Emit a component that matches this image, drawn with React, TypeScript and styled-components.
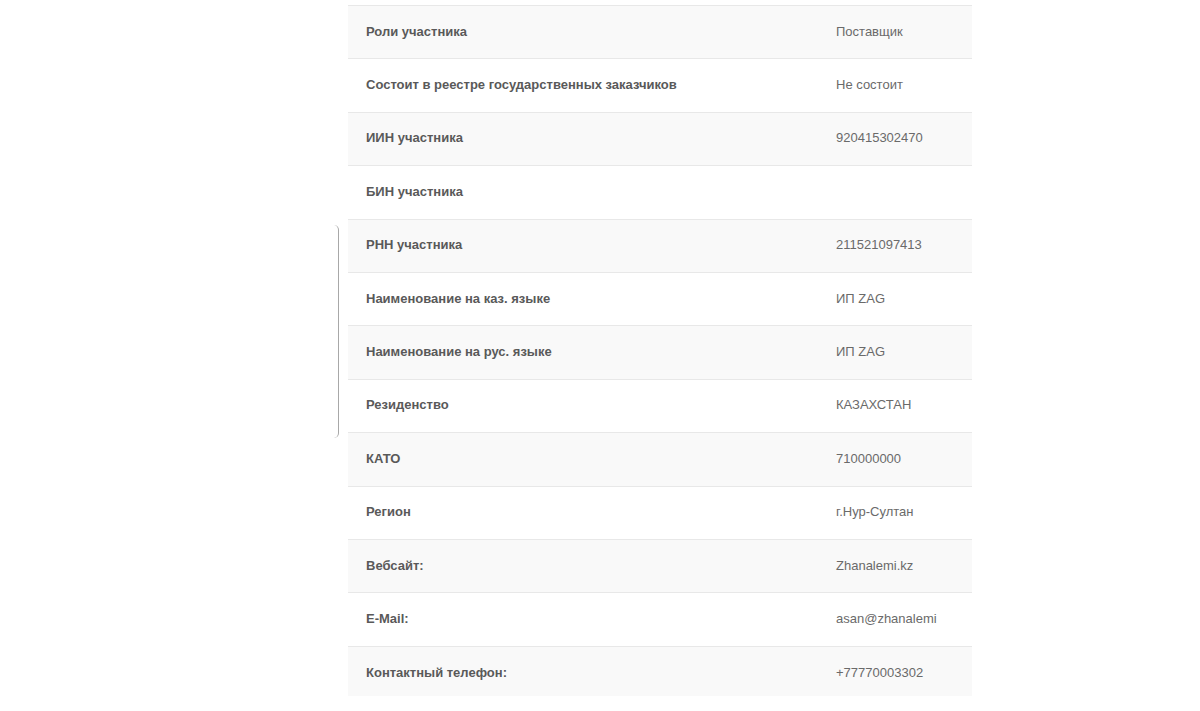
import React from "react";
import styled, { createGlobalStyle } from "styled-components";

const Global = createGlobalStyle`
  html, body { margin: 0; padding: 0; background: #fff; }
  body { font-family: "Liberation Sans", Arial, sans-serif; }
`;

const Page = styled.div`
  position: relative;
  width: 1200px;
  height: 711px;
  padding: 5px 0 0 348px;
  box-sizing: border-box;
  overflow: hidden;
`;

const Bracket = styled.div`
  position: absolute;
  left: 334px;
  top: 225px;
  width: 4px;
  height: 213px;
  border-right: 1.5px solid #a8a8a8;
  border-radius: 0 5px 5px 0;
`;

const Panel = styled.div`
  width: 624px;
  height: 691px;
  overflow: hidden;
`;

const Table = styled.table`
  width: 100%;
  border-collapse: collapse;
  font-size: 13px;
`;

const Row = styled.tr<{ $striped: boolean }>`
  background: ${(p) => (p.$striped ? "#f9f9f9" : "#fff")};
  height: 53.4px;
`;

const Label = styled.td`
  border-top: 1px solid #e8e8e8;
  padding: 0 18px 2px;
  width: 434px;
  font-weight: bold;
  color: #595959;
  vertical-align: middle;
`;

const Value = styled.td`
  border-top: 1px solid #e8e8e8;
  padding: 0 18px 2px;
  color: #6a6a6a;
  vertical-align: middle;
  white-space: nowrap;
`;

const rows: [string, string][] = [
  ["Роли участника", "Поставщик"],
  ["Состоит в реестре государственных заказчиков", "Не состоит"],
  ["ИИН участника", "920415302470"],
  ["БИН участника", ""],
  ["РНН участника", "211521097413"],
  ["Наименование на каз. языке", "ИП ZAG"],
  ["Наименование на рус. языке", "ИП ZAG"],
  ["Резиденство", "КАЗАХСТАН"],
  ["КАТО", "710000000"],
  ["Регион", "г.Нур-Султан"],
  ["Вебсайт:", "Zhanalemi.kz"],
  ["E-Mail:", "asan@zhanalemi"],
  ["Контактный телефон:", "+77770003302"],
];

export default function App() {
  return (
    <>
      <Global />
      <Page>
        <Bracket />
        <Panel>
          <Table>
            <tbody>
              {rows.map(([l, v], i) => (
                <Row key={i} $striped={i % 2 === 0}>
                  <Label>{l}</Label>
                  <Value>{v}</Value>
                </Row>
              ))}
            </tbody>
          </Table>
        </Panel>
      </Page>
    </>
  );
}
